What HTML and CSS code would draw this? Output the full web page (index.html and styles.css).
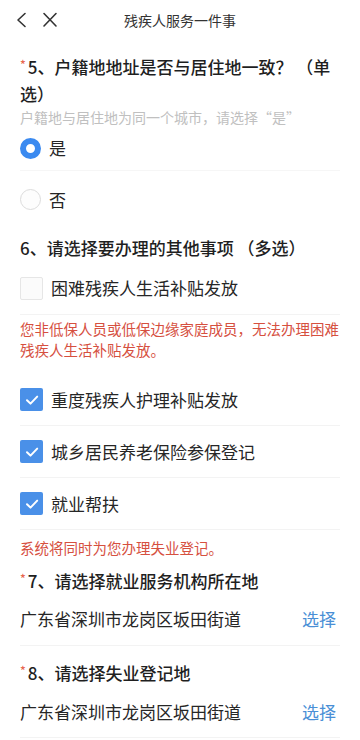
FILE: index.html
```html
<!DOCTYPE html>
<html lang="zh-CN">
<head>
<meta charset="utf-8">
<meta name="viewport" content="width=360, initial-scale=1">
<title>残疾人服务一件事</title>
<link rel="stylesheet" href="styles.css">
</head>
<body>
<header class="nav">
  <div class="nav-left">
    <svg class="nav-icon" width="16" height="20" viewBox="0 0 16 20"><path d="M10 3.5 L3 10 L10 16.5" fill="none" stroke="#333" stroke-width="1.6" stroke-linecap="round" stroke-linejoin="round"/></svg>
    <svg class="nav-icon" width="16" height="20" viewBox="0 0 16 20"><path d="M2 3.5 L14 16 M14 3.5 L2 16" fill="none" stroke="#333" stroke-width="1.6" stroke-linecap="round"/></svg>
  </div>
  <div class="nav-title">残疾人服务一件事</div>
  <div class="nav-right"></div>
</header>

<main class="content">
  <section class="q5">
    <h2 class="q-title"><span class="star">*</span>5、户籍地地址是否与居住地一致？ （单<br>选）</h2>
    <p class="hint">户籍地与居住地为同一个城市，请选择“是”</p>
    <div class="radio-row divided">
      <span class="radio checked"></span><span class="opt">是</span>
    </div>
    <div class="radio-row second">
      <span class="radio"></span><span class="opt">否</span>
    </div>
  </section>

  <section class="q6">
    <h2 class="q-title">6、请选择要办理的其他事项 （多选）</h2>
    <div class="check-row">
      <span class="checkbox"></span><span class="opt">困难残疾人生活补贴发放</span>
    </div>
    <p class="note note-a">您非低保人员或低保边缘家庭成员，无法办理困难残疾人生活补贴发放。</p>
    <div class="check-row first-checked">
      <span class="checkbox checked"><svg width="22" height="22" viewBox="0 0 22 22"><path d="M6 11.2 L9.5 14.6 L16.2 7.6" fill="none" stroke="#fff" stroke-width="2" stroke-linecap="round" stroke-linejoin="round"/></svg></span><span class="opt">重度残疾人护理补贴发放</span>
    </div>
    <div class="check-row">
      <span class="checkbox checked"><svg width="22" height="22" viewBox="0 0 22 22"><path d="M6 11.2 L9.5 14.6 L16.2 7.6" fill="none" stroke="#fff" stroke-width="2" stroke-linecap="round" stroke-linejoin="round"/></svg></span><span class="opt">城乡居民养老保险参保登记</span>
    </div>
    <div class="check-row">
      <span class="checkbox checked"><svg width="22" height="22" viewBox="0 0 22 22"><path d="M6 11.2 L9.5 14.6 L16.2 7.6" fill="none" stroke="#fff" stroke-width="2" stroke-linecap="round" stroke-linejoin="round"/></svg></span><span class="opt">就业帮扶</span>
    </div>
    <p class="note note-b">系统将同时为您办理失业登记。</p>
  </section>

  <section class="q7">
    <h2 class="q-title"><span class="star">*</span>7、请选择就业服务机构所在地</h2>
    <div class="addr-row">
      <span class="opt">广东省深圳市龙岗区坂田街道</span><span class="pick">选择</span>
    </div>
  </section>

  <section class="q8">
    <h2 class="q-title"><span class="star">*</span>8、请选择失业登记地</h2>
    <div class="addr-row">
      <span class="opt">广东省深圳市龙岗区坂田街道</span><span class="pick">选择</span>
    </div>
  </section>
</main>
</body>
</html>
```

FILE: styles.css
```css
* {
  box-sizing: border-box;
}

html, body {
  margin: 0;
  padding: 0;
  background: #fff;
}

body {
  font-family: "Noto Sans CJK SC", "Noto Sans", sans-serif;
  color: #222;
  width: 360px;
  overflow: hidden;
}

.nav {
  height: 40px;
  display: grid;
  grid-template-columns: 1fr auto 1fr;
  align-items: center;
}

.nav-left {
  display: flex;
  align-items: center;
  gap: 11px;
  padding-left: 15px;
}

.nav-icon {
  display: block;
}

.nav-title {
  font-size: 14px;
  color: #333;
  line-height: 20px;
}

.content {
  padding: 0 20px;
}

.q-title {
  margin: 0;
  font-size: 17px;
  line-height: 27px;
  font-weight: 500;
  color: #1f1f1f;
}

.star {
  color: #e8674f;
  font-size: 12px;
  vertical-align: top;
  line-height: 22px;
  margin-right: 2px;
}

.q5 {
  margin-top: 12.5px;
}

.hint {
  margin: 0;
  font-size: 14px;
  line-height: 20px;
  color: #c0c0c0;
}

.radio-row {
  height: 44px;
  display: flex;
  align-items: center;
  gap: 8px;
}

.radio-row.second {
  margin-top: 7px;
}

.divided {
  border-bottom: 1px solid #f6f6f6;
}

.radio {
  width: 21px;
  height: 21px;
  border-radius: 50%;
  border: 1px solid #dcdcdc;
  background: #fdfdfd;
  flex: none;
}

.radio.checked {
  border: 6px solid #3b8af0;
  background: #fff;
}

.opt {
  font-size: 17px;
  line-height: 24px;
  color: #262626;
}

.q6 {
  margin-top: 12.5px;
}

.check-row {
  height: 52px;
  display: flex;
  align-items: center;
  gap: 8px;
  border-bottom: 1px solid #f3f3f3;
  margin-top: 1.5px;
}

.check-row + .check-row {
  margin-top: 0;
}

.check-row.first-checked {
  margin-top: 14.5px;
}

.checkbox {
  width: 23px;
  height: 23px;
  border-radius: 2px;
  border: 1px solid #e6e6e6;
  background: #fbfbfb;
  flex: none;
  display: flex;
  align-items: center;
  justify-content: center;
}

.checkbox.checked {
  border: none;
  background: #4a90e8;
}

.checkbox svg {
  display: block;
}

.note {
  margin: 0;
  font-size: 14.5px;
  line-height: 21px;
  color: #d6503f;
}

.note-a {
  padding-top: 3px;
}

.note-b {
  padding-top: 6.5px;
}

.q7 {
  margin-top: 9px;
}

.addr-row {
  height: 52px;
  display: flex;
  align-items: center;
  justify-content: space-between;
  border-bottom: 1px solid #f3f3f3;
}

.pick {
  font-size: 17px;
  line-height: 24px;
  color: #4a8fd6;
  padding-right: 4px;
}

.q8 {
  margin-top: 13.5px;
}
```
